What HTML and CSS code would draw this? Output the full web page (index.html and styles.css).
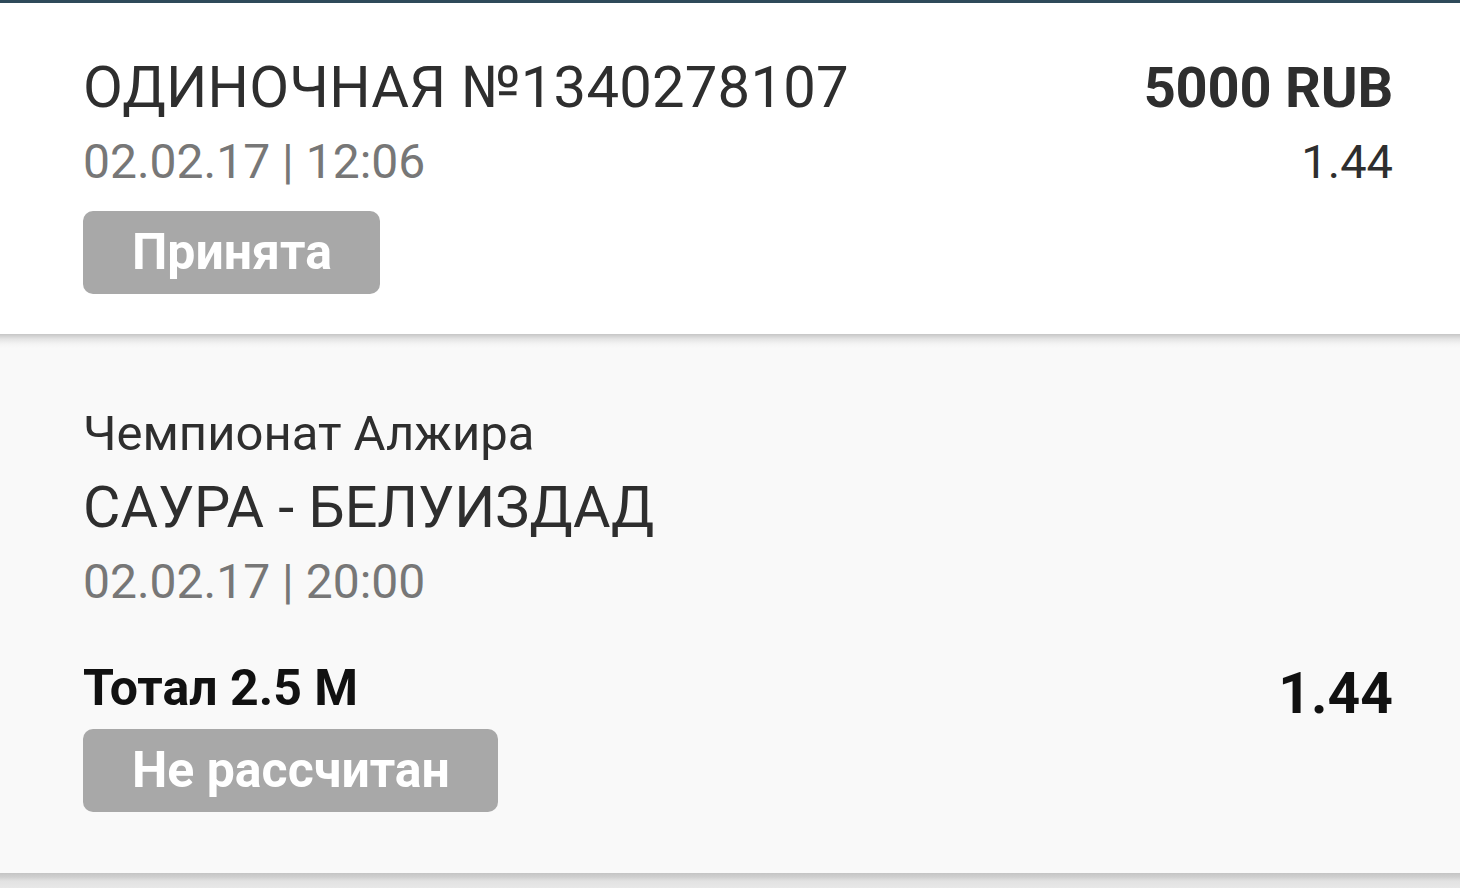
FILE: index.html
```html
<!DOCTYPE html>
<html lang="ru">
<head>
<meta charset="utf-8">
<link rel="stylesheet" href="styles.css">
</head>
<body>
<div class="topline"></div>
<section class="card head">
  <div class="row">
    <div class="title">ОДИНОЧНАЯ №1340278107</div>
    <div class="amount">5000 RUB</div>
  </div>
  <div class="row">
    <div class="date">02.02.17 | 12:06</div>
    <div class="coef">1.44</div>
  </div>
  <div class="badge badge-accepted">Принята</div>
</section>
<section class="card event">
  <div class="league">Чемпионат Алжира</div>
  <div class="match">САУРА - БЕЛУИЗДАД</div>
  <div class="date">02.02.17 | 20:00</div>
  <div class="row bet-row">
    <div class="bet">Тотал 2.5 М</div>
    <div class="bet-coef">1.44</div>
  </div>
  <div class="badge badge-pending">Не рассчитан</div>
</section>
<div class="rest"></div>
</body>
</html>
```
FILE: styles.css
```css
html, body {
  margin: 0;
  padding: 0;
}
body {
  width: 1460px;
  height: 888px;
  overflow: hidden;
  background: #e6e6e6;
  font-family: Roboto, "Noto Sans", sans-serif;
}
.topline {
  height: 3px;
  background: #2e4a5a;
}
.card {
  padding: 0 67px 0 83px;
  box-sizing: border-box;
}
.head {
  background: #ffffff;
  height: 331px;
  padding-top: 47px;
}
.row {
  display: flex;
  justify-content: space-between;
  align-items: baseline;
}
.title {
  font-size: 58px;
  line-height: 74px;
  color: #2e2e2e;
  letter-spacing: 0.2px;
}
.amount {
  font-size: 56px;
  line-height: 74px;
  font-weight: 700;
  color: #2e2e2e;
  letter-spacing: -0.2px;
}
.date {
  font-size: 48px;
  line-height: 74px;
  color: #777777;
}
.coef {
  font-size: 47px;
  line-height: 74px;
  color: #2e2e2e;
}
.badge {
  display: inline-block;
  background: #a8a8a8;
  color: #ffffff;
  font-weight: 700;
  font-size: 50px;
  line-height: 83px;
  height: 83px;
  padding: 0 48px 0 49px;
  border-radius: 10px;
}
.badge-accepted {
  margin-top: 12px;
}
.event {
  height: 539px;
  padding-top: 62px;
  background: linear-gradient(#c6c6c6 0px, #e4e4e4 5px, #f4f4f4 10px, #f9f9f9 14px) #f9f9f9;
}
.league {
  font-size: 49px;
  line-height: 75px;
  color: #2e2e2e;
}
.match {
  font-size: 57.5px;
  line-height: 74px;
  color: #2e2e2e;
}
.bet-row {
  margin-top: 32px;
  align-items: flex-start;
}
.bet {
  font-size: 50px;
  line-height: 74px;
  font-weight: 700;
  color: #111111;
}
.bet-coef {
  font-size: 57px;
  line-height: 63px;
  font-weight: 700;
  color: #111111;
  margin-top: 11px;
}
.badge-pending {
  margin-top: 4px;
}
.rest {
  height: 15px;
  background: linear-gradient(#c4c4c4 0px, #cfcfcf 4px, #e2e2e2 8px, #e8e8e8 15px);
}
```
